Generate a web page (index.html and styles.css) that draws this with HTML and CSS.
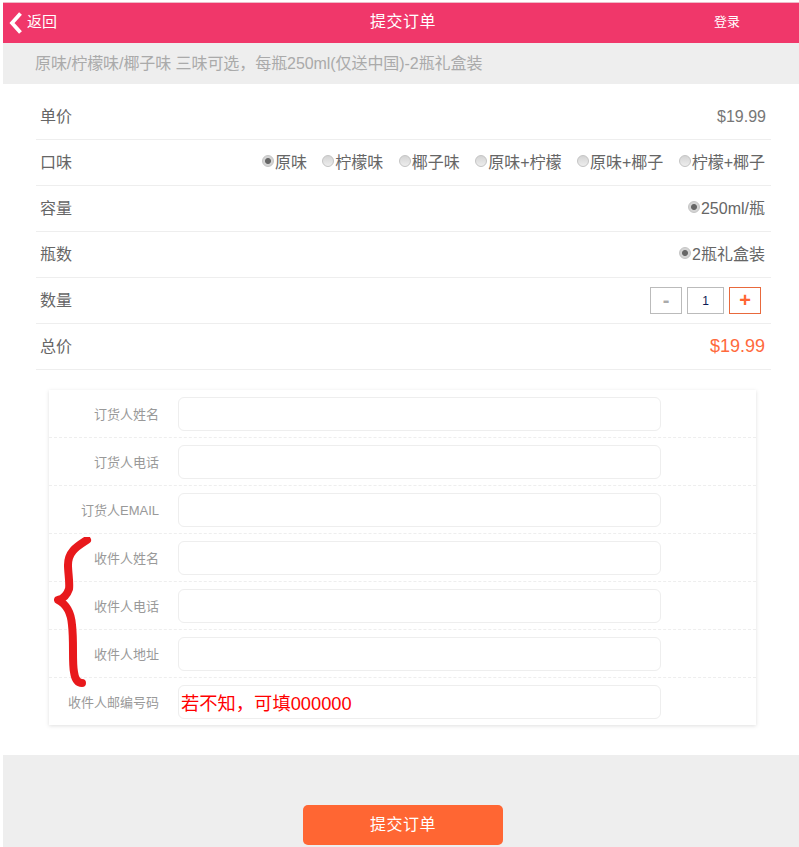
FILE: index.html
```html
<!DOCTYPE html>
<html lang="zh-CN">
  <head>
    <meta charset="UTF-8" />
    <meta name="viewport" content="width=device-width, initial-scale=1.0" />
    <title>提交订单</title>
    <link rel="stylesheet" href="styles.css">
  </head>
  <body>
    <div class="page">
      <div class="topbar">
        <a class="back">
          <svg class="back-icon" width="14" height="22" viewBox="0 0 14 22">
            <path d="M11.5 1.500 L3 11 L11.5 20.500" fill="none" stroke="#fff" stroke-width="3.800" />
          </svg>
          <span class="back-text">返回</span>
        </a>
        <div class="title">提交订单</div>
        <a class="login">登录</a>
      </div>

      <div class="subtitle">原味/柠檬味/椰子味 三味可选，每瓶250ml(仅送中国)-2瓶礼盒装</div>

      <div class="info">
        <div class="row">
          <span class="name">单价</span>
          <span class="price">$19.99</span>
        </div>
        <div class="row">
          <span class="name">口味</span>
          <div class="options">
            <label class="option"><i class="radio checked"></i>原味</label>
            <label class="option"><i class="radio"></i>柠檬味</label>
            <label class="option"><i class="radio"></i>椰子味</label>
            <label class="option"><i class="radio"></i>原味+柠檬</label>
            <label class="option"><i class="radio"></i>原味+椰子</label>
            <label class="option"><i class="radio"></i>柠檬+椰子</label>
          </div>
        </div>
        <div class="row">
          <span class="name">容量</span>
          <div class="options">
            <label class="option"><i class="radio checked"></i>250ml/瓶</label>
          </div>
        </div>
        <div class="row">
          <span class="name">瓶数</span>
          <div class="options">
            <label class="option"><i class="radio checked"></i>2瓶礼盒装</label>
          </div>
        </div>
        <div class="row">
          <span class="name">数量</span>
          <div class="qty">
            <span class="qty-btn minus">-</span>
            <span class="qty-num">1</span>
            <span class="qty-btn plus">+</span>
          </div>
        </div>
        <div class="row">
          <span class="name">总价</span>
          <span class="price total">$19.99</span>
        </div>
      </div>

      <div class="form-card">
        <div class="field">
          <label>订货人姓名</label>
          <input type="text" />
        </div>
        <div class="field">
          <label>订货人电话</label>
          <input type="text" />
        </div>
        <div class="field">
          <label>订货人EMAIL</label>
          <input type="text" />
        </div>
        <div class="field">
          <label>收件人姓名</label>
          <input type="text" />
        </div>
        <div class="field">
          <label>收件人电话</label>
          <input type="text" />
        </div>
        <div class="field">
          <label>收件人地址</label>
          <input type="text" />
        </div>
        <div class="field">
          <label>收件人邮编号码</label>
          <input class="hint" type="text" value="若不知，可填000000" />
        </div>

        <!-- hand drawn red brace on top of the form -->
        <svg class="brace" width="46" height="160" viewBox="0 0 46 160">
          <path d="M33 3 C24 9 14 14 14 28 C14 36 16 46 15 52 C13 58 9 62 4 63 C12 67 17 75 18 88 C20 105 18 125 20 135 C21 142 24 146 28 146" fill="none" stroke="#e8191c" stroke-width="8" stroke-linecap="round" stroke-linejoin="round" />
        </svg>
      </div>

      <div class="footer">
        <button class="submit">提交订单</button>
      </div>
    </div>
  </body>
</html>
```

FILE: styles.css
```css
* {
  box-sizing: border-box;
}

html,
body {
  height: 100%;
}

body {
  margin: 0;
  background-color: #fff;
  font-family: "Liberation Sans", "Noto Sans CJK SC", sans-serif;
  overflow: hidden;
}

.page {
  padding: 3px 0 0 3px;
  height: 847px;
  display: flex;
  flex-direction: column;
}

.topbar {
  height: 40px;
  flex: none;
  background-color: #f0376a;
  color: #fff;
  display: flex;
  align-items: center;
  box-shadow: 0 -1px 0 #eebbc8;
}

.back {
  width: 300px;
  display: flex;
  align-items: center;
  gap: 4px;
  padding-left: 6px;
  font-size: 15px;
}

.back-text {
  padding-bottom: 5px;
}

.title {
  width: 200px;
  padding-bottom: 7px;
  text-align: center;
  font-size: 16px;
  letter-spacing: 0.5px;
}

.login {
  margin-left: 211px;
  padding-bottom: 5px;
  font-size: 13px;
}

.subtitle {
  height: 41px;
  padding-left: 32px;
  background-color: #eee;
  color: #aaa;
  font-size: 16px;
  letter-spacing: -0.07px;
  line-height: 42px;
}

.info {
  margin: 10px 28px 0 33px;
}

.row {
  height: 46px;
  padding: 0 5px 0 4px;
  border-bottom: 1px solid #eee;
  display: flex;
  align-items: center;
  justify-content: space-between;
  font-size: 16px;
  color: #666;
}

.name {
  margin-bottom: 4px;
}

.price {
  font-size: 16px;
  color: #777;
}

.total {
  margin-right: 1px;
  font-size: 18px;
  color: #ff6a3c;
}

.options {
  display: flex;
  gap: 15.4px;
  margin: 0 1px 4px 0;
}

.option {
  display: flex;
  align-items: center;
  gap: 1px;
}

.radio {
  width: 12px;
  height: 12px;
  border-radius: 50%;
  border: 1px solid #c4c4c4;
  background: linear-gradient(#d4d4d4, #ededed);
}

.radio.checked {
  background: radial-gradient(circle, #666 0 2.500px, #d4d4d4 3.500px);
}

.qty {
  display: flex;
  gap: 5px;
  margin-right: 5px;
}

.qty-btn,
.qty-num {
  height: 27px;
  width: 32px;
  border: 1px solid #bbb;
  display: flex;
  align-items: center;
  justify-content: center;
  font-size: 14px;
}

.qty-num {
  width: 37px;
  font-size: 12px;
  color: #0a1a55;
}

.minus {
  color: #aaa;
  font-size: 20px;
  font-weight: bold;
}

.plus {
  border-color: #e8693c;
  color: #ff6633;
  font-size: 20px;
  font-weight: bold;
}

.form-card {
  position: relative;
  width: 707px;
  height: 335px;
  margin: 20px 0 0 46px;
  flex: none;
  background-color: #fff;
  box-shadow: 0 1px 4px rgba(0, 0, 0, 0.13);
}

.field {
  height: 48px;
  padding-top: 7px;
  border-bottom: 1px dashed #eee;
  display: flex;
  align-items: flex-start;
}

.field:last-of-type {
  border-bottom: none;
}

.field label {
  width: 110px;
  height: 34px;
  line-height: 36px;
  text-align: right;
  font-size: 13px;
  color: #999;
}

.field input {
  width: 483px;
  height: 34px;
  margin-left: 19px;
  padding: 0 2px;
  border: 1px solid #eee;
  border-radius: 6px;
  background-color: #fff;
  outline: none;
  font-family: inherit;
}

.field input.hint {
  padding-bottom: 1px;
  font-size: 18.3px;
  color: #f00;
}

.brace {
  position: absolute;
  left: 5px;
  top: 147px;
}

.footer {
  flex: 1;
  margin-top: 30px;
  background-color: #eee;
  padding: 50px 0 0 300px;
}

.submit {
  width: 200px;
  height: 40px;
  padding: 0 0 4px;
  border: none;
  border-radius: 5px;
  background-color: #ff6633;
  color: #fff;
  font-family: inherit;
  font-size: 16px;
  letter-spacing: 0.5px;
}
```
